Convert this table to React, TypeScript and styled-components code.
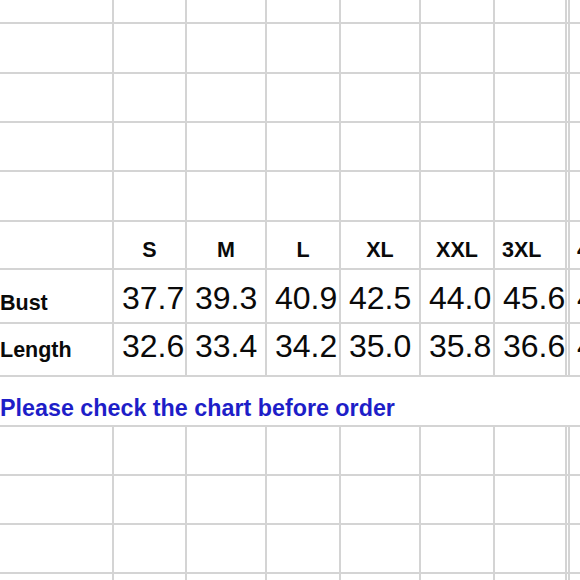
import React from 'react'
import styled, { createGlobalStyle } from 'styled-components'

const GlobalStyle = createGlobalStyle`
  html, body {
    margin: 0;
    padding: 0;
    background: #ffffff;
    overflow: hidden;
  }
  body {
    font-family: "Liberation Sans", Arial, Helvetica, sans-serif;
    color: #0a0a0a;
  }
`

// spreadsheet grid: the gap shows the grey rule lines
const Sheet = styled.div`
  width: 580px;
  height: 580px;
  display: grid;
  grid-template-columns: 112px 71px 78px 72px 78px 72px 70px 1px 1fr;
  grid-template-rows: 22px 48px 47px 47px 48px 46px 52px 51px 48px 47px 47px 47px 6px;
  gap: 2px;
  background: #d4d4d4;
  overflow: hidden;
`

const Cell = styled.div`
  background: #ffffff;
  overflow: hidden;
  white-space: nowrap;
  line-height: 1;
`

const HeadCell = styled(Cell)<{ $align?: 'center' | 'left' }>`
  font-size: 21.5px;
  font-weight: 700;
  padding-top: 18px;
  text-align: ${p => (p.$align === 'left' ? 'left' : 'center')};
  padding-left: ${p => (p.$align === 'left' ? '7px' : '0')};
`

const LabelCell = styled(Cell)<{ $top: number }>`
  font-size: 21.5px;
  font-weight: 700;
  padding-top: ${p => p.$top}px;
`

const NumCell = styled(Cell)<{ $top: number }>`
  font-size: 32px;
  padding-top: ${p => p.$top}px;
  padding-left: 8px;
`

const NoteCell = styled(Cell)`
  grid-column: 1 / -1;
  font-size: 23.3px;
  font-weight: 700;
  color: #1e1ec8;
  padding-top: 20px;
`

const COLS = 9
const sizes = ['S', 'M', 'L', 'XL', 'XXL', '3XL']
const rows = [
  { label: 'Bust', labelTop: 23, numTop: 12, values: ['37.7', '39.3', '40.9', '42.5', '44.0', '45.6', '47.2'] },
  { label: 'Length', labelTop: 16, numTop: 6, values: ['32.6', '33.4', '34.2', '35.0', '35.8', '36.6', '47.4'] },
]

const EmptyRow = ({ k }: { k: string }) => (
  <>
    {Array.from({ length: COLS }).map((_, i) => (
      <Cell key={`${k}-${i}`} />
    ))}
  </>
)

export default function App() {
  return (
    <>
      <GlobalStyle />
      <Sheet>
        <EmptyRow k="r0" />
        <EmptyRow k="r1" />
        <EmptyRow k="r2" />
        <EmptyRow k="r3" />
        <EmptyRow k="r4" />

        <Cell />
        {sizes.map(s => (
          <HeadCell key={s} $align={s === '3XL' ? 'left' : 'center'}>{s}</HeadCell>
        ))}
        <Cell />
        <HeadCell $align="left">4XL</HeadCell>

        {rows.map(r => (
          <React.Fragment key={r.label}>
            <LabelCell $top={r.labelTop}>{r.label}</LabelCell>
            {r.values.slice(0, 6).map((v, i) => (
              <NumCell key={i} $top={r.numTop}>{v}</NumCell>
            ))}
            <Cell />
            <NumCell $top={r.numTop} style={{ paddingLeft: 7 }}>{r.values[6]}</NumCell>
          </React.Fragment>
        ))}

        <NoteCell>Please check the chart before order</NoteCell>

        <EmptyRow k="r9" />
        <EmptyRow k="r10" />
        <EmptyRow k="r11" />
        <EmptyRow k="r12" />
      </Sheet>
    </>
  )
}
